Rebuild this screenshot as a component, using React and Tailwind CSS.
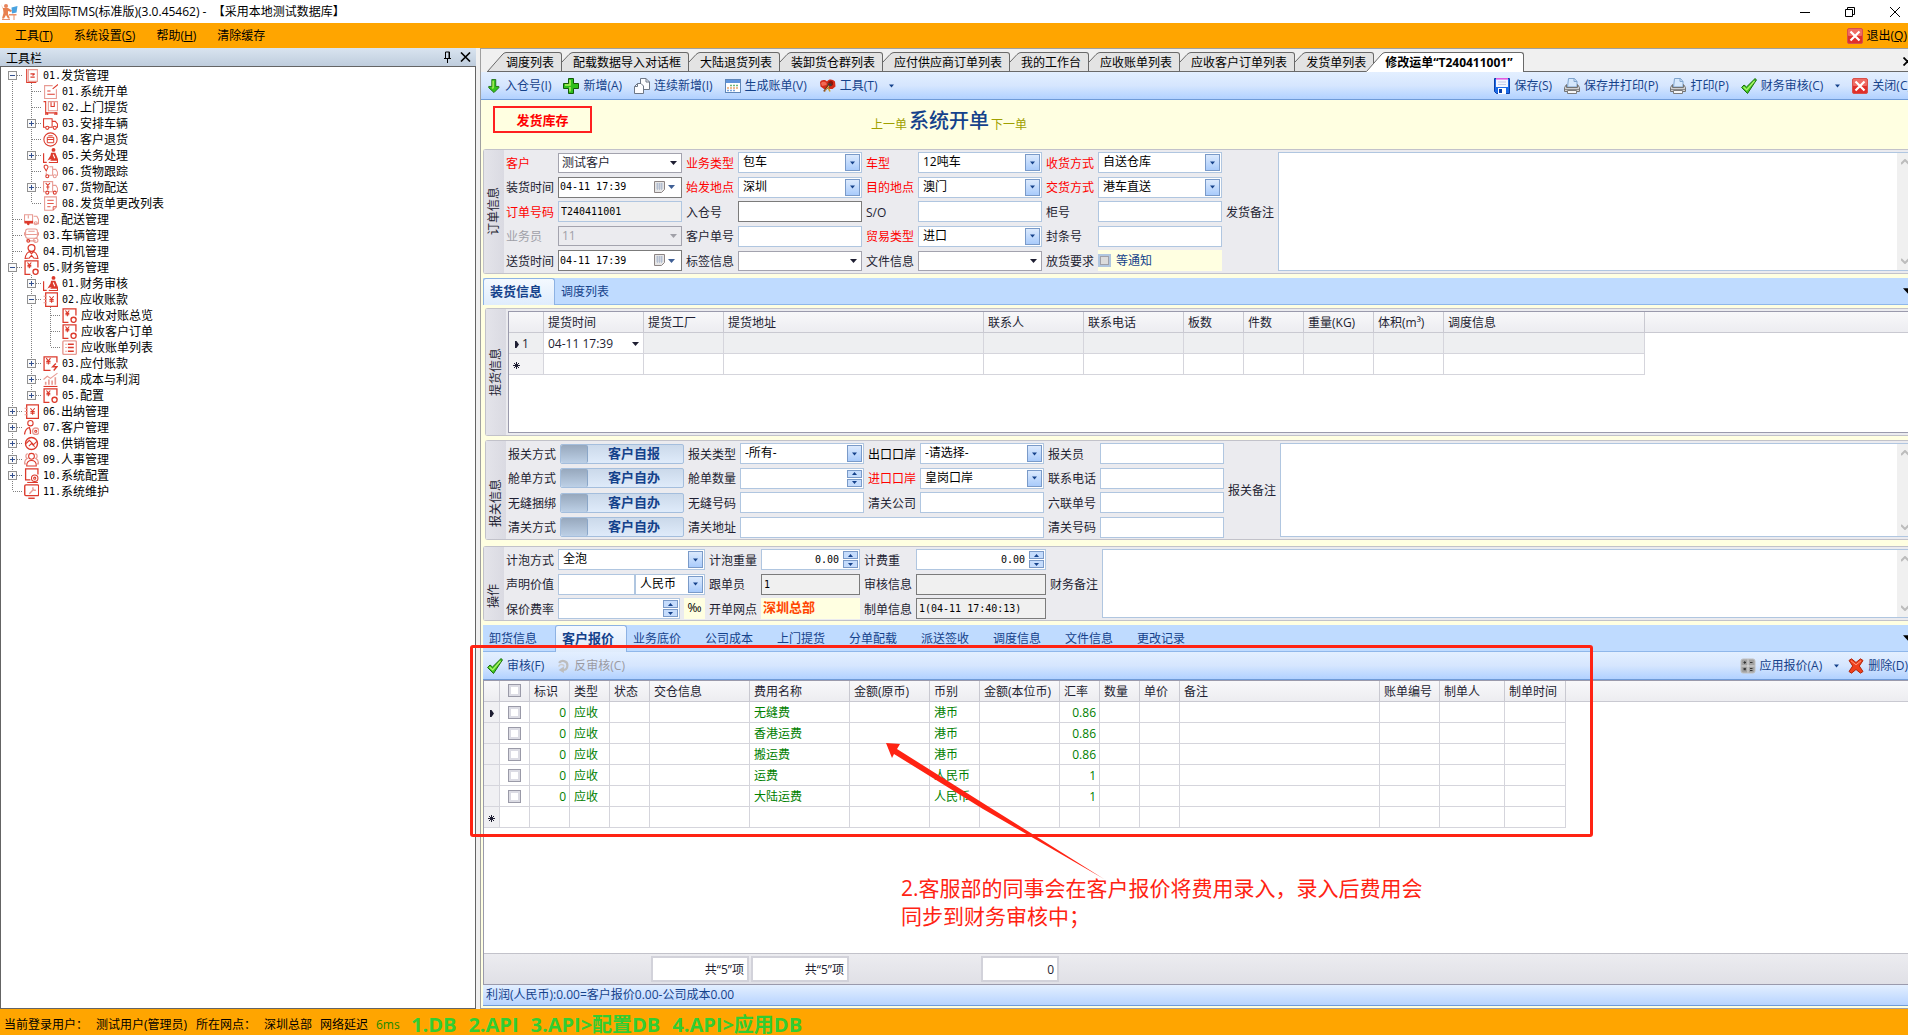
import React from "react";

/* ---------- small drawings ---------- */

const Svg = ({ s = 16, vb = "0 0 16 16", className = "", children }) => (
  <svg width={s} height={s} viewBox={vb} fill="none" className={`shrink-0 ${className}`} aria-hidden="true">
    {children}
  </svg>
);

const Caret = ({ className = "" }) => (
  <svg width="7" height="4" viewBox="0 0 7 4" className={`shrink-0 ${className}`} fill="currentColor" aria-hidden="true">
    <path d="M0 0h7L3.500 4z" />
  </svg>
);

const LogoIcon = () => (
  <Svg s={17} vb="0 0 17 17">
    <circle cx="5" cy="3" r="2" fill="#e8845c" />
    <path d="M0 1.500l2 3.500 5 0 4 2.500-1 1.500-3-1v3l2 4.500H7L5 12l-2 3.500H1L2.500 10 2 6z" fill="#e8804f" />
    <path d="M8 11h7.500v1.500h-2V17h-1v-4.500H8z" fill="#e8916d" />
    <path d="M10.500 4.500l6-1.500-1 6.500-4.500 1z" fill="#4aa3e0" />
    <path d="M1 16.500h8" stroke="#e8916d" />
  </Svg>
);

const CloseRed = () => (
  <Svg>
    <rect x=".5" y=".5" width="15" height="15" rx="1.500" fill="#e02f2b" stroke="#d8504a" />
    <rect x="1" y="1" width="14" height="7" rx="1" fill="#ef6b64" />
    <path d="M3.500 3.500l9 9M12.500 3.500l-9 9" stroke="#fff" strokeWidth="2.200" />
  </Svg>
);

const icons = {
  down: (
    <Svg s={14} vb="0 0 14 16">
      <path d="M4.500.500h4.500v8h3.500v1.500L7 15.500 1 10V8.500h3.500z" fill="#35c41c" stroke="#1c6b0e" />
      <path d="M6 2v8l-1.500.500" stroke="#b6f060" strokeWidth="1.500" />
    </Svg>
  ),
  plus: (
    <Svg>
      <path d="M5.500.500h5v5h5v5h-5v5h-5v-5h-5v-5h5z" fill="#2fbf1c" stroke="#145a0a" />
      <path d="M7 2v5H2M7 9v4.500" stroke="#b6f060" strokeWidth="1.500" />
    </Svg>
  ),
  pages: (
    <Svg>
      <path d="M6.500.500h5.500l3.500 3.500v7.500h-9z" fill="#fdfdff" stroke="#6d7786" />
      <path d="M3.500 5.500h3.500l2.500 2.500v7.500h-9v-7z" fill="#fdfdff" stroke="#6d7786" />
      <path d="M12 .500v3.500h3.500M3.500 5.500v3H.500" stroke="#6d7786" />
    </Svg>
  ),
  calendar: (
    <Svg>
      <rect x=".5" y="1.500" width="15" height="13" fill="#fff" stroke="#5f86b8" />
      <rect x="1" y="2" width="14" height="3" fill="#5f93da" />
      <path d="M5 7.500h9" stroke="#6cb87c" strokeWidth="1.500" strokeDasharray="2 1" />
      <path d="M2 10h12" stroke="#e8a36b" strokeWidth="1.500" strokeDasharray="2 1" />
      <path d="M2 12.500h9" stroke="#7aa4dc" strokeWidth="1.500" strokeDasharray="2 1" />
    </Svg>
  ),
  tools: (
    <Svg s={17} vb="0 0 17 16">
      <path d="M1 5c1-3 5-3 7-1 2-3 6-2 8 0l.5 5-3 2.500H5L1.500 9z" fill="#d42c18" />
      <path d="M2 5.500c1.500-2 4-1.500 5.500 0v2L3 8.500z" fill="#f26a54" />
      <path d="M9 4.500l3-1.500 2 1.500v3l-2 1z" fill="#8e1408" />
      <path d="M11 6l-6 8" stroke="#6b3a1c" strokeWidth="2" />
      <path d="M11 7l-5.500 7" stroke="#e6a860" />
      <path d="M8 6l4 0 1 2-2 1z" fill="#3c3c3c" />
      <path d="M9 10l2 4" stroke="#caa02c" strokeWidth="1.500" />
    </Svg>
  ),
  save: (
    <Svg>
      <path d="M.500.500h15v15H2.500l-2-2z" fill="#1c6be8" stroke="#0b3fa8" />
      <rect x="2" y="1" width="12" height="8" fill="#f4f6ff" />
      <path d="M2 .800h12" stroke="#e05ce0" strokeWidth="1.600" />
      <path d="M4 4h8M4 6.500h8" stroke="#c4cce8" />
      <rect x="4" y="10" width="8" height="6" fill="#fff" />
      <rect x="5" y="11" width="3" height="4" fill="#0b3fa8" />
    </Svg>
  ),
  printer: (
    <Svg>
      <path d="M3.500 9L4.500.500h6l2.500 3V9z" fill="#d6e8fc" stroke="#7ea3cc" />
      <path d="M10 .500v3h3" stroke="#7ea3cc" />
      <path d="M2.500 6.500L.500 9.500v4h15v-4l-2-3v3h-11z" fill="#d0d0d0" stroke="#747474" />
      <path d="M1 11.500h14" stroke="#8a8a8a" />
      <path d="M3.500 12.500h9v3h-9z" fill="#f6f6f6" stroke="#7c7c7c" />
    </Svg>
  ),
  check: (
    <Svg>
      <path d="M.600 9.500L3 7l2.500 2L14 .600l1.500 1.200L6.500 15.500z" fill="#43cc22" stroke="#1a6a0c" />
      <path d="M2.500 9l3.200 3L13.500 3" stroke="#b4f26c" strokeWidth="1.200" />
    </Svg>
  ),
  close: <CloseRed />,
  undo: (
    <Svg s={14} vb="0 0 14 16">
      <path d="M2.500 4.500C5 .500 12 2 12 7S9.500 12.500 7 12.500" stroke="#bdbdbd" strokeWidth="2.600" />
      <path d="M2 12.500L8 8.500v7.500z" fill="#bdbdbd" />
      <path d="M2 8.500c1-3 6-3 6 0" stroke="#cbcbcb" strokeWidth="1.800" />
    </Svg>
  ),
  calc: (
    <Svg>
      <rect x="1" y="1" width="14" height="14" rx="2" fill="#a2a2a2" stroke="#c0c0c0" />
      <path d="M8 1.500v13M1.500 8h13" stroke="#dcdcdc" />
      <path d="M3.500 4.500h2.500M4.700 3.300v2.500M10 4.500h2.500M3.700 10.200l2 2M5.700 10.200l-2 2M10 10.500h2.500M10 12.500h2.500" stroke="#333" strokeWidth="1.200" />
    </Svg>
  ),
  del: (
    <Svg>
      <path d="M1 2.500L3.500.800 8 4.500 12.500.800 15 2.500 11.300 8l3.700 5.500-2.500 1.700L8 11.500l-4.500 3.700L1 13.500 4.700 8z" fill="#f0401c" stroke="#b02408" />
      <path d="M3 2.800l5 4 5-4" stroke="#ff9a7c" />
    </Svg>
  ),
};

const RED = "#dc3a2c";
const SOFT = "#e89a92";
const yen = (x, y, k = 1) => (
  <path d={`M${x - 2 * k} ${y - 3 * k}l${2 * k} ${2.5 * k} ${2 * k} ${-2.5 * k}M${x - 2 * k} ${y}h${4 * k}M${x - 2 * k} ${y + 1.5 * k}h${4 * k}M${x} ${y - 0.5 * k}v${3.5 * k}`} stroke={RED} />
);
const treeIcons = {
  stack: <><path d="M4 1.500h8.500v11H4z" stroke={SOFT} /><path d="M2.500 1v12.500h9" stroke={RED} /><path d="M6 5.500h4M6 8.500h4M8 7l2-1.500" stroke={RED} /></>,
  edit: <><path d="M9 1.500H1.500v12h11V5" stroke={SOFT} /><path d="M9 4.500l5-4" stroke={RED} /><path d="M4 6.500h3M4 9.500h7" stroke={RED} /></>,
  trolley: <><path d="M.500 1.500h2v10.500h11" stroke={RED} /><path d="M5 1.500h8.500v8.500H5z" stroke={SOFT} /><path d="M7.500 2v4h3V2" stroke={RED} /><circle cx="3.500" cy="13" r="1" stroke={RED} /><circle cx="12" cy="13" r="1" stroke={RED} /></>,
  truck: <><path d="M2.500 10.500H.500v-8h8v8H5.500M8.500 5h3l2 2.500v3h-1" stroke={RED} /><circle cx="4" cy="11" r="1.500" stroke={RED} /><circle cx="11" cy="11" r="1.500" stroke={RED} /></>,
  circle: <><circle cx="7" cy="7" r="6.200" stroke={RED} /><path d="M4 5h6v5H4zM4 7h6M5 3.500h4" stroke={RED} strokeWidth=".9" /></>,
  desk: <><path d="M.500 5v8.500h3" stroke={RED} strokeWidth="1.200" /><circle cx="9.800" cy="1.800" r="1.800" fill={RED} /><path d="M7.500 4.500l4 0 2.500 6v3.500H5L8 10.500 5.500 11 4 12l3-5z" fill={RED} /><path d="M9.500 6l1.500 3.500M6 12.500h7" stroke="#fff" /></>,
  pin: <><path d="M1.300 1.500a2 2 0 013.400 1.500L3 6.500 1 3z" stroke={RED} /><path d="M6 2.500h3v8H5.500M3 8v3M9 5h3l1.500 2.500v3H12.500" stroke={SOFT} /><circle cx="4" cy="11.500" r="1.400" stroke={RED} /><circle cx="11" cy="11.500" r="1.400" stroke={SOFT} /></>,
  truckYen: <><path d="M2.500 11H.500V1.500h8.500V11H5.500M9 5h3l1.500 2.500V11h-1" stroke={SOFT} /><path d="M2.500 3l2 2 2-2M3 6.500h3M4.500 5V9" stroke={RED} /><circle cx="4" cy="11.800" r="1.400" stroke={RED} /><circle cx="11" cy="11.800" r="1.400" stroke={RED} /></>,
  lines: <><path d="M1.500.800h11v9.500l-3 3h-8z" stroke={SOFT} /><path d="M4 4h6M4 7h6M4 10h3M12.500 10h-3v3" stroke={RED} strokeWidth=".8" /></>,
  van: <><path d="M.500 2.500h7.500v7H.500z" stroke={SOFT} /><path d="M.500 9.500h8" stroke={RED} strokeWidth="2.500" /><path d="M9 4h3l1.500 3v4H9M4 3v3" stroke={SOFT} /><circle cx="4" cy="11" r="1.300" fill={RED} /><circle cx="11" cy="10.500" r="1.400" stroke={SOFT} /></>,
  bus: <><rect x="1.500" y="1" width="11" height="8.500" rx="2" stroke={SOFT} /><path d="M.500 4v3M13.500 4v3M2 6h10M4 3h6M3 9.500V12h8" stroke={SOFT} /><circle cx="4" cy="12" r="1.300" stroke={RED} /><circle cx="11" cy="11.500" r="2" stroke={SOFT} /></>,
  person: <><circle cx="7" cy="3.800" r="3.200" stroke={RED} strokeWidth="1.200" /><path d="M1 13.500c.5-4 2-5.500 4-6.500l2 2 2-2c2 1 3.500 2.500 4 6.500l-4-.5-2-2.500-2 2.500z" stroke={RED} /></>,
  yenGear: <><path d="M13 7V.800H1v12.700h5" stroke={RED} strokeWidth="1.200" />{yen(5, 5, 0.9)}<circle cx="10.800" cy="11" r="2.400" stroke={RED} strokeWidth="1.300" /></>,
  yenBook: <><path d="M2.500.800h11v12.700h-11z" stroke={RED} strokeWidth="1.200" /><path d="M.500 4h3M.500 7h3M.500 10h3" stroke={SOFT} />{yen(8, 7)}</>,
  list: <><rect x=".8" y=".8" width="12.600" height="12.600" rx="1" stroke={SOFT} strokeWidth="1.300" /><path d="M5.500 4H11M5.500 7H11M5.500 10.500H11" stroke={RED} strokeWidth="1.300" /><path d="M3 4h1.500M3 7h1.500M3 10.500h1.500" stroke={SOFT} /></>,
  yenPay: <><path d="M13 6V.800H1v12.700h6" stroke={RED} strokeWidth="1.200" />{yen(5, 5)}<path d="M12 7l-3 3h4l-3 3.500" stroke={RED} strokeWidth="1.300" /></>,
  chart: <><path d="M.500 7L4 4l3 2 6.500-5" stroke={SOFT} /><path d="M2.500 12V9M5.500 12V7M8.500 12V8M11.500 12V5" stroke={SOFT} strokeWidth="1.500" /><path d="M.500 13.500h13" stroke={RED} /></>,
  personGear: <><circle cx="6" cy="3" r="2.500" stroke={RED} /><path d="M.500 13.500C1 9 3 7.500 5 7l1 3v3" stroke={RED} strokeWidth="1.200" /><circle cx="11" cy="10.500" r="3" stroke={SOFT} strokeWidth="1.300" /><circle cx="11" cy="10.500" r="1" stroke={RED} /></>,
  trade: <><circle cx="7" cy="7" r="5.600" stroke={RED} strokeWidth="1.300" /><path d="M2 7l3-3 4 4 3-3M4.500 9.500L7 7l3 3" stroke={RED} /></>,
  people: <><circle cx="7" cy="4" r="2.700" stroke={RED} /><path d="M2.500 13c0-3.500 2-5 4.500-5s4.500 1.500 4.500 5z" stroke={RED} /><path d="M3.500 1.500C1 2 1.500 5.500 3 6 1 7 .500 9 .500 11H2M10.500 1.500C13 2 12.500 5.500 11 6c2 1 2.500 3 2.500 5H12" stroke={SOFT} strokeWidth="1.200" /></>,
  monGear: <><path d="M13 6V.800H1.500V11H6" stroke={RED} strokeWidth="1.200" /><circle cx="10" cy="9.500" r="3" stroke={RED} /><circle cx="10" cy="9.500" r="1" stroke={RED} /><path d="M3 13.500h10" stroke={RED} /></>,
  monitor: <><rect x=".7" y=".8" width="13" height="10" rx="1" stroke={RED} strokeWidth="1.300" /><path d="M5 9l4-4M8.500 3c-1 2 1 3.500 2.500 2.500" stroke={SOFT} strokeWidth="1.300" /><path d="M4 13.300h6" stroke={RED} strokeWidth="1.300" /></>,
};

/* ---------- navigation tree ---------- */

/* One guide character per level: v line, t tee, l corner, p/m expander, P/M expander at an end of its line. */
const tree = [
  ["M", "stack", "01.", "发货管理"],
  ["vt", "edit", "01.", "系统开单"],
  ["vt", "trolley", "02.", "上门提货"],
  ["vp", "truck", "03.", "安排车辆"],
  ["vt", "circle", "04.", "客户退货"],
  ["vp", "desk", "05.", "关务处理"],
  ["vt", "pin", "06.", "货物跟踪"],
  ["vp", "truckYen", "07.", "货物配送"],
  ["vl", "lines", "08.", "发货单更改列表"],
  ["t", "van", "02.", "配送管理"],
  ["t", "bus", "03.", "车辆管理"],
  ["t", "person", "04.", "司机管理"],
  ["m", "yenGear", "05.", "财务管理"],
  ["vp", "desk", "01.", "财务审核"],
  ["vm", "yenBook", "02.", "应收账款"],
  ["vvt", "yenGear", "", "应收对账总览"],
  ["vvt", "yenGear", "", "应收客户订单"],
  ["vvl", "list", "", "应收账单列表"],
  ["vp", "yenPay", "03.", "应付账款"],
  ["vp", "chart", "04.", "成本与利润"],
  ["vP", "yenGear", "05.", "配置"],
  ["p", "yenBook", "06.", "出纳管理"],
  ["p", "personGear", "07.", "客户管理"],
  ["p", "trade", "08.", "供销管理"],
  ["p", "people", "09.", "人事管理"],
  ["p", "monGear", "10.", "系统配置"],
  ["l", "monitor", "11.", "系统维护"],
];

function Guide({ c }) {
  const box = "pPmM".includes(c);
  return (
    <svg width="19" height="16" viewBox="0 0 19 16" shapeRendering="crispEdges" fill="none" className="shrink-0" aria-hidden="true">
      <g stroke="#808080" strokeDasharray="1 1">
        {c !== "M" && <path d="M9.500 0V8" />}
        {"vtpmM".includes(c) && <path d="M9.500 8V16" />}
        {c !== "v" && <path d="M10 8.500H19" />}
      </g>
      {box && (
        <>
          <rect x="5.500" y="4.500" width="8" height="8" fill="#fafafa" stroke="#919191" />
          <path d="M7 8.500h5" stroke="#33508f" />
          {"pP".includes(c) && <path d="M9.500 6v5" stroke="#33508f" />}
        </>
      )}
    </svg>
  );
}

function Sidebar() {
  return (
    <aside className="flex w-[476px] shrink-0 flex-col">
      <div className="flex h-[18px] items-center bg-linear-to-b from-[#d9e4f0] to-[#bfcddd] pr-[5px] pl-[6px]">
        <h2 className="flex-1 pt-[3px]">工具栏</h2>
        <button aria-label="固定" className="mr-2">
          <svg width="9" height="12" viewBox="0 0 9 12" stroke="#000" fill="none"><path d="M2.500 1h4v6M6 1v6M1 7.500h7M4.500 8v4M2.500 1v6" /></svg>
        </button>
        <button aria-label="关闭工具栏">
          <svg width="11" height="10" viewBox="0 0 11 10" stroke="#000" strokeWidth="1.600"><path d="M1 .500l9 9M10 .500l-9 9" /></svg>
        </button>
      </div>
      <nav className="flex-1 border border-[#646464] bg-white text-black">
        <ul>
          {tree.map(([guides, icon, no, name], i) => (
            <li key={i} className="flex h-4 items-center pl-[2px] leading-4">
              {[...guides].map((c, k) => <Guide key={k} c={c} />)}
              <a href="#" className="flex items-center">
                <svg width="15" height="15" viewBox="0 0 14 14" fill="none" className="mr-1 ml-[2px] shrink-0" aria-hidden="true">{treeIcons[icon]}</svg>
                {no && <span className="w-[18px] pt-px font-['DejaVu_Sans_Mono'] text-[10px]">{no}</span>}
                <span className="pt-px">{name}</span>
              </a>
            </li>
          ))}
        </ul>
      </nav>
    </aside>
  );
}

/* ---------- form controls ---------- */

const line = "border-[#b0c6e0]";

function Label({ id, text, tone = "text-[#1e1e32]", w = "w-[52px]" }) {
  return <label htmlFor={id} className={`${w} shrink-0 pt-[2px] whitespace-nowrap ${tone}`}>{text}</label>;
}

function Text({ id, value = "", w = "w-[124px]", look = `${line} bg-white`, pad = "px-[2px]" }) {
  return <input id={id} defaultValue={value} className={`h-[21px] min-w-0 shrink-0 border text-black outline-none ${pad} ${w} ${look}`} />;
}

function Combo({ id, value, w = "w-[124px]", label }) {
  return (
    <div className={`relative h-[21px] shrink-0 border bg-white ${line} ${w}`}>
      <select id={id} aria-label={label} className="h-full w-full appearance-none bg-transparent pr-4 pb-px pl-1 text-black outline-none"><option>{value}</option></select>
      <span className="pointer-events-none absolute top-px right-px flex h-[17px] w-[15px] items-center justify-center border border-[#7a9ac8] bg-linear-to-b from-[#dceafd] to-[#a9cbfb] text-[#15428b]">
        <Caret className="w-[5px]" />
      </span>
    </div>
  );
}

function PlainSelect({ id, value = "", disabled }) {
  return (
    <div className={`relative h-[20px] w-[124px] shrink-0 border border-[#a3a3ae] ${disabled ? "bg-[#ebebef] text-[#a0a0a8]" : "bg-white text-[#1e1e32]"}`}>
      <select id={id} disabled={disabled} className="h-full w-full appearance-none bg-transparent pl-[3px] outline-none disabled:opacity-100"><option>{value}</option></select>
      <Caret className="pointer-events-none absolute top-[7px] right-1" />
    </div>
  );
}

function DateBox({ id, value }) {
  return (
    <div className="flex h-[21px] w-[124px] shrink-0 items-center border border-[#7b7b7b] bg-white">
      <input id={id} defaultValue={value} className="min-w-0 flex-1 pl-px font-['DejaVu_Sans_Mono'] text-[10px] text-black outline-none" />
      <button aria-label="选择日期" className="mr-[6px] flex items-center gap-[2px] text-[#3f5f95]">
        <svg width="12" height="13" viewBox="0 0 12 13" fill="none"><path d="M.500.500h10v8l-3 3h-7z" fill="#e6e6e6" stroke="#8c8484" /><path d="M2 3h7M2 5h7M2 7h7M3.500 2v7M5.500 2v7M7.500 2v7" stroke="#a8b4cc" strokeWidth=".7" /></svg>
        <Caret />
      </button>
    </div>
  );
}

function Spin({ id, value = "", w = "w-[124px]" }) {
  return (
    <div className={`flex h-[21px] shrink-0 border bg-white p-px ${line} ${w}`}>
      <input id={id} defaultValue={value} className="min-w-0 flex-1 pr-1 text-right font-['DejaVu_Sans_Mono'] text-[10px] text-black outline-none" />
      <div className="flex w-[15px] flex-col gap-px text-[#15428b]">
        <button aria-label="增加" className="flex flex-1 items-center justify-center border border-[#7a9ac8] bg-[#c5dcfc]"><Caret className="h-[3px] w-[5px] rotate-180" /></button>
        <button aria-label="减少" className="flex flex-1 items-center justify-center border border-[#7a9ac8] bg-[#c5dcfc]"><Caret className="h-[3px] w-[5px]" /></button>
      </div>
    </div>
  );
}

function Toggle({ id, value }) {
  return (
    <button id={id} role="switch" aria-checked="false" className="flex h-[20px] w-[124px] shrink-0 rounded-[2px] border border-[#a4bedd] bg-linear-to-b from-[#cbd9ea] to-[#dfebfa] text-[13px] font-bold text-[#15428b]">
      <span className="h-full w-[27px] rounded-[2px] border-r border-[#8ba7c9] bg-linear-to-b from-[#97a8bd] to-[#bdd0e6]" />
      <span className="flex-1 pr-[3px] leading-4">{value}</span>
    </button>
  );
}

const RO = "border-[#7b7b7b] bg-[#f0f0f0]";

function Memo({ id, label }) {
  return (
    <div className="ml-1 flex flex-1 self-stretch">
      <label htmlFor={id} className="w-[52px] shrink-0 self-center pt-[2px] whitespace-nowrap text-[#1e1e32]">{label}</label>
      <div className={`flex flex-1 border border-r-0 bg-white ${line}`}>
        <textarea id={id} className="min-w-0 flex-1 resize-none outline-none" />
        <div className="flex w-[11px] flex-col items-start justify-between overflow-hidden bg-[#f0f0f0] py-[6px] pl-1">
          <svg width="8" height="6" viewBox="0 0 8 6" className="shrink-0" fill="none" stroke="#bcbcbc" strokeWidth="2"><path d="M0 5l4-4 4 4" /></svg>
          <svg width="8" height="6" viewBox="0 0 8 6" className="shrink-0" fill="none" stroke="#bcbcbc" strokeWidth="2"><path d="M0 1l4 4 4-4" /></svg>
        </div>
      </div>
    </div>
  );
}

function Group({ title, low, className = "", children }) {
  return (
    <section className={`flex rounded-l-[3px] border border-r-0 border-[#c2c2ca] bg-[#ebebef] ${className}`}>
      <h3 className={`flex w-[20px] shrink-0 items-center bg-linear-to-r from-[#e4e4ea] to-[#dadae2] text-[#1e1e32] ${low ? "justify-end pb-3" : "justify-center"} flex-col`}>
        <span className="rotate-180 leading-4 [text-orientation:sideways] [writing-mode:vertical-rl]">{title}</span>
      </h3>
      {children}
    </section>
  );
}

const rd = "text-[#ff0000]";

function Cells({ rows, className = "" }) {
  return (
    <div className={`flex flex-col justify-between ${className}`}>
      {rows.map((row, i) => (
        <div key={i} className="flex items-center gap-1">
          {row.map(([id, text, el, tone], k) => (
            <div key={k} className="flex items-center">
              <Label id={id} text={text} tone={tone} />
              {el}
            </div>
          ))}
        </div>
      ))}
    </div>
  );
}

const orderRows = [
  [
    ["cust", "客户", <PlainSelect id="cust" value="测试客户" />, rd],
    ["biz", "业务类型", <Combo id="biz" value="包车" />, rd],
    ["car", "车型", <Combo id="car" value="12吨车" />, rd],
    ["recv", "收货方式", <Combo id="recv" value="自送仓库" />, rd],
  ],
  [
    ["load", "装货时间", <DateBox id="load" value="04-11 17:39" />],
    ["from", "始发地点", <Combo id="from" value="深圳" />, rd],
    ["to", "目的地点", <Combo id="to" value="澳门" />, rd],
    ["give", "交货方式", <Combo id="give" value="港车直送" />, rd],
  ],
  [
    ["ono", "订单号码", <Text id="ono" value="T240411001" look="border-[#b0c6e0] bg-[#f0f0f0] font-['DejaVu_Sans_Mono'] text-[10px]" />, rd],
    ["wh", "入仓号", <Text id="wh" look="border-[#7b7b7b] bg-white" />],
    ["so", "S/O", <Text id="so" />],
    ["cab", "柜号", <Text id="cab" />],
  ],
  [
    ["sales", "业务员", <PlainSelect id="sales" value="11" disabled />, "text-[#a0a0a8]"],
    ["cno", "客户单号", <Text id="cno" />],
    ["trade", "贸易类型", <Combo id="trade" value="进口" />, rd],
    ["seal", "封条号", <Text id="seal" />],
  ],
  [
    ["deliv", "送货时间", <DateBox id="deliv" value="04-11 17:39" />],
    ["tag", "标签信息", <PlainSelect id="tag" />],
    ["file", "文件信息", <PlainSelect id="file" />],
    ["hold", "放货要求",
      <span className="flex h-[21px] w-[124px] shrink-0 items-center bg-[#ffffe1] text-[#15428b]">
        <input id="hold" type="checkbox" className="mr-[5px] size-[13px] appearance-none border-2 border-[#b0c6e0] bg-[#dcdcdc] outline outline-1 -outline-offset-3 outline-[#a0a0a8]" />
        <label htmlFor="hold" className="pt-px">等通知</label>
      </span>],
  ],
];

const customsRows = [
  [
    ["d1", "报关方式", <Toggle id="d1" value="客户自报" />],
    ["d2", "报关类型", <Combo id="d2" value="-所有-" />],
    ["d3", "出口口岸", <Combo id="d3" value="-请选择-" />, "text-black"],
    ["d4", "报关员", <Text id="d4" />],
  ],
  [
    ["e1", "舱单方式", <Toggle id="e1" value="客户自办" />],
    ["e2", "舱单数量", <Spin id="e2" />],
    ["e3", "进口口岸", <Combo id="e3" value="皇岗口岸" />, rd],
    ["e4", "联系电话", <Text id="e4" />],
  ],
  [
    ["f1", "无缝捆绑", <Toggle id="f1" value="客户自办" />],
    ["f2", "无缝号码", <Text id="f2" />],
    ["f3", "清关公司", <Text id="f3" />],
    ["f4", "六联单号", <Text id="f4" />],
  ],
  [
    ["g1", "清关方式", <Toggle id="g1" value="客户自办" />],
    ["g2", "清关地址", <Text id="g2" w="w-[304px]" />],
    ["g4", "清关号码", <Text id="g4" />],
  ],
];

const mono = "font-['DejaVu_Sans_Mono'] text-[10px]";
const opRows = [
  [
    ["h1", "计泡方式", <Combo id="h1" value="全泡" w="w-[147px]" />],
    ["h2", "计泡重量", <Spin id="h2" value="0.00" w="w-[99px]" />],
    ["h3", "计费重", <Spin id="h3" value="0.00" w="w-[130px]" />],
  ],
  [
    ["i1", "声明价值",
      <span className="flex"><Text id="i1" w="w-[77px]" /><Combo id="i1c" label="币种" value="人民币" w="w-[70px]" /></span>],
    ["i2", "跟单员", <Text id="i2" value="1" w="w-[99px]" look={`${RO} ${mono}`} />],
    ["i3", "审核信息", <Text id="i3" w="w-[130px]" look={RO} />],
  ],
  [
    ["j1", "保价费率",
      <span className="flex w-[147px] justify-between">
        <Spin id="j1" w="w-[122px]" />
        <span className="w-[21px] bg-[#ffffe1] text-center leading-5">‰</span>
      </span>],
    ["j2", "开单网点",
      <output id="j2" className="block h-[21px] w-[99px] bg-[#ffffe1] pl-[2px] text-[13px] leading-[18px] font-bold text-[#ff4500]">深圳总部</output>],
    ["j3", "制单信息", <Text id="j3" value="1(04-11 17:40:13)" w="w-[130px]" look={`${RO} ${mono}`} />],
  ],
];

/* ---------- tabs and toolbars ---------- */

const docTabs = ["调度列表", "配载数据导入对话框", "大陆退货列表", "装卸货仓群列表", "应付供应商订单列表", "我的工作台", "应收账单列表", "应收客户订单列表", "发货单列表"];

function DocTabs() {
  return (
    <div className="flex h-6 items-end overflow-hidden border-t border-[#a0a0a0] bg-[#f0f0f0] pl-[6px]">
      <div className="flex h-5 items-end">
        {docTabs.map((t, i) => (
          <button key={t} className="flex h-5 items-stretch text-black">
            {i === 0 ? (
              <svg width="19" height="20" viewBox="0 0 19 20"><path d="M0 20L15 3Q17 .500 19 .500V20z" fill="#e3e3e3" /><path d="M0 19.500h19M.500 19.500L15 3Q17 .500 19 .500" stroke="#696969" fill="none" /></svg>
            ) : (
              <svg width="11" height="20" viewBox="0 0 11 20"><path d="M0 10L7 2.500Q9 .500 11 .500V20H0z" fill="#e3e3e3" /><path d="M0 19.500h11M0 10L7 2.500Q9 .500 11 .500" stroke="#696969" fill="none" /></svg>
            )}
            <span className="rounded-tr-[3px] border-t border-r border-b border-[#696969] bg-[#e3e3e3] pr-[7px] leading-[19px] whitespace-nowrap">{t}</span>
          </button>
        ))}
        <button className="relative -ml-2 flex h-5 items-stretch font-bold text-black">
          <svg width="19" height="20" viewBox="0 0 19 20"><path d="M0 20L15 3Q17 .500 19 .500V20z" fill="#fff" /><path d="M.500 19.500L15 3Q17 .500 19 .500" stroke="#696969" fill="none" /></svg>
          <span className="rounded-tr-[3px] border-t border-r border-[#696969] bg-white pr-[10px] leading-[19px] whitespace-nowrap">修改运单“T240411001”</span>
        </button>
      </div>
      <div className="flex h-5 flex-1 items-center justify-end border-b border-[#696969]">
        <button aria-label="关闭页面" className="-mr-1">
          <svg width="9" height="9" viewBox="0 0 9 9" stroke="#000" strokeWidth="1.800"><path d="M.500.500l8 8M8.500.500l-8 8" /></svg>
        </button>
      </div>
    </div>
  );
}

function Tool({ icon, text, caret, off }) {
  return (
    <button disabled={off} className={`flex shrink-0 items-center gap-1 whitespace-nowrap ${off ? "text-[#9a9aa2]" : "text-[#15428b]"}`}>
      {icons[icon]}
      <span>{text}</span>
      {caret && <Caret className="ml-2 w-[5px]" />}
    </button>
  );
}

const bar = "flex h-7 items-center gap-3 overflow-hidden border-b border-[#6f9bd8] bg-linear-to-b from-[#e3efff] via-[#d6e6fe] to-[#b1d1ff]";

function PageTabs({ items, active }) {
  return (
    <div className="ml-[2px] flex h-[27px] border-b border-[#8fb7ea] bg-[#bfdbff] text-[#15428b]">
      {items.map((t, i) => (
        <button
          key={t}
          className={
            i === active
              ? "-mb-px w-[72px] rounded-t-[3px] border border-b-0 border-[#8db2e3] bg-linear-to-b from-[#f4f9ff] to-[#dfecfc] pb-[2px] pl-[6px] text-left text-[13px] font-bold whitespace-nowrap"
              : "w-[72px] pt-px pl-[6px] text-left whitespace-nowrap"
          }
        >
          {t}
        </button>
      ))}
      <button aria-label="更多" className="-mr-[5px] ml-auto text-black"><Caret className="h-[6px] w-[10px]" /></button>
    </div>
  );
}

/* ---------- tables ---------- */

const pickCols = [["", 35], ["提货时间", 100], ["提货工厂", 80], ["提货地址", 260], ["联系人", 100], ["联系电话", 100], ["板数", 60], ["件数", 60], ["重量(KG)", 70], ["体积(m³)", 70], ["调度信息", 201]];
const feeCols = [["", 16], ["*", 30], ["标识", 40], ["类型", 40], ["状态", 40], ["交仓信息", 100], ["费用名称", 100], ["金额(原币)", 80], ["币别", 50], ["金额(本位币)", 80], ["汇率", 40], ["数量", 40], ["单价", 40], ["备注", 200], ["账单编号", 60], ["制单人", 65], ["制单时间", 61]];
const fees = [["无缝费", "港币", "0.86"], ["香港运费", "港币", "0.86"], ["搬运费", "港币", "0.86"], ["运费", "人民币", "1"], ["大陆运费", "人民币", "1"]];

const th = "h-[21px] border-r border-b border-[#c9c9d1] p-0 pt-px pl-1 text-left font-normal whitespace-nowrap";
const td = "h-[21px] border-r border-b border-[#d5d5dc] p-0 pt-[2px] pl-1 whitespace-nowrap";
const headRow = "bg-linear-to-b from-[#f8f8fa] to-[#ececf0] text-[#1e1e32]";

const Cols = ({ cols }) => (
  <colgroup>
    {cols.map(([, w], i) => <col key={i} style={{ width: w }} />)}
    <col />
  </colgroup>
);
const Marker = () => <svg width="4" height="7" viewBox="0 0 4 7" className="inline-block align-middle"><path d="M0 0h1.500L4 3.500 1.500 7H0z" fill="#1e1e32" /></svg>;
const Star = () => <svg width="7" height="7" viewBox="0 0 7 7" className="inline-block align-middle" stroke="#1e1e32"><path d="M3.500 0v7M0 3.500h7M1 1l5 5M6 1L1 6" /></svg>;
const Tick = ({ label }) => <input type="checkbox" aria-label={label} className="-mt-[2px] ml-1 block size-[13px] appearance-none border border-[#9a9aa8] bg-white outline outline-2 -outline-offset-3 outline-[#dcdce4]" />;

function PickTable() {
  return (
    <table className="w-full table-fixed border-separate border-spacing-0 text-[#1e1e32]">
      <Cols cols={pickCols} />
      <thead>
        <tr className={headRow}>
          {pickCols.map(([t], i) => <th key={i} className={th}>{t}</th>)}
          <th className="border-b border-[#c9c9d1]" />
        </tr>
      </thead>
      <tbody>
        <tr className="bg-[#eeeff1]">
          <td className={td}><span className="ml-[2px]"><Marker /> 1</span></td>
          <td className={`${td} bg-white`}>
            <span className="flex items-center justify-between pr-1">04-11 17:39 <Caret /></span>
          </td>
          {pickCols.slice(2).map(([t]) => <td key={t} className={td} />)}
          <td className="bg-white" />
        </tr>
        <tr>
          <td className={`${td} bg-[#f3f3f5] leading-4`}><Star /></td>
          {pickCols.slice(1).map(([t]) => <td key={t} className={td} />)}
          <td />
        </tr>
      </tbody>
    </table>
  );
}

function FeeTable() {
  const blank = (n) => Array.from({ length: n }, (_, i) => <td key={`b${i}`} className={td} />);
  return (
    <table className="w-full table-fixed border-separate border-spacing-0 text-[#008000]">
      <Cols cols={feeCols} />
      <thead>
        <tr className={headRow}>
          {feeCols.map(([t], i) => <th key={i} className={th}>{t === "*" ? <Tick label="全选" /> : t}</th>)}
          <th className="border-b border-[#c9c9d1]" />
        </tr>
      </thead>
      <tbody>
        {fees.map(([name, cur, rate], i) => (
          <tr key={name}>
            <td className={`${td} bg-[#f0f0f3] leading-4`}>{i === 0 && <span className="ml-[2px]"><Marker /></span>}</td>
            <td className={td}><Tick label={name} /></td>
            <td className={`${td} pr-[3px] text-right`}>0</td>
            <td className={td}>应收</td>
            {blank(2)}
            <td className={td}>{name}</td>
            <td className={td} />
            <td className={td}>{cur}</td>
            <td className={td} />
            <td className={`${td} pr-[3px] text-right`}>{rate}</td>
            {blank(6)}
            <td />
          </tr>
        ))}
        <tr>
          <td className={`${td} bg-[#f0f0f3] leading-4`}><Star /></td>
          {blank(16)}
          <td />
        </tr>
      </tbody>
    </table>
  );
}

const sumBox = "h-[26px] border-2 border-[#d2d2da] bg-white pr-[3px] text-right leading-6 text-[#1e1e32]";

/* ---------- page ---------- */

export default function App() {
  return (
    <div className="relative flex min-h-screen w-full flex-col overflow-hidden bg-[#f0f0f0] font-['Open_Sans','Noto_Sans_CJK_SC',sans-serif] text-[12px] leading-4 text-black">
      <header className="flex h-[23px] items-center bg-white pl-[1px]">
        <LogoIcon />
        <h1 className="ml-[5px] flex-1">时效国际TMS(标准版)(3.0.45462) - &nbsp;【采用本地测试数据库】</h1>
        <div className="flex items-center gap-[35px] pr-2 text-black">
          <button aria-label="最小化"><svg width="10" height="10" viewBox="0 0 10 10" stroke="currentColor"><path d="M0 5.500h10" /></svg></button>
          <button aria-label="还原"><svg width="10" height="10" viewBox="0 0 10 10" stroke="currentColor" fill="none"><path d="M.500 2.500h7v7h-7zM2.500 2.500v-2h7v7h-2" /></svg></button>
          <button aria-label="关闭"><svg width="10" height="10" viewBox="0 0 10 10" stroke="currentColor"><path d="M0 0l10 10M10 0L0 10" /></svg></button>
        </div>
      </header>

      <div className="flex h-[25px] items-center gap-[21px] bg-[#ffa500] pl-[15px]">
        <button>工具(<u>T</u>)</button>
        <button>系统设置(<u>S</u>)</button>
        <button>帮助(<u>H</u>)</button>
        <button>清除缓存</button>
        <button className="mr-px ml-auto flex items-center gap-1 whitespace-nowrap"><CloseRed /><span>退出(<u>Q</u>)</span></button>
      </div>

      <div className="flex flex-1">
        <Sidebar />
        <main className="ml-1 flex min-w-0 flex-1 flex-col border-b border-l border-[#a0a0a0] bg-[#ffffe1]">
          <DocTabs />
          <div className={`${bar} pl-[6px]`}>
            <Tool icon="down" text="入仓号(I)" />
            <Tool icon="plus" text="新增(A)" />
            <Tool icon="pages" text="连续新增(I)" />
            <Tool icon="calendar" text="生成账单(V)" />
            <Tool icon="tools" text="工具(T)" caret />
            <div className="-mr-[3px] ml-auto flex gap-3">
              <Tool icon="save" text="保存(S)" />
              <Tool icon="printer" text="保存并打印(P)" />
              <Tool icon="printer" text="打印(P)" />
              <Tool icon="check" text="财务审核(C)" caret />
              <Tool icon="close" text="关闭(C)" />
            </div>
          </div>

          <div className="flex h-[49px] items-start pt-[6px] pl-3">
            <button className="h-[27px] w-[99px] border-2 border-[#ff2020] text-[13px] font-bold text-[#ff0000]">发货库存</button>
            <div className="ml-[279px] flex items-end gap-[2px] pt-[3px] whitespace-nowrap">
              <a href="#" className="text-[#a0a000]">上一单</a>
              <h2 className="text-[20px] leading-6 font-medium text-[#15428b]">系统开单</h2>
              <a href="#" className="text-[#a0a000]">下一单</a>
            </div>
          </div>

          <Group title="订单信息" className="ml-[2px] h-[125px]">
            <Cells rows={orderRows} className="my-[2px] ml-[2px]" />
            <div className="flex flex-1 pt-[2px] pb-[2px]"><Memo id="memo1" label="发货备注" /></div>
          </Group>

          <div className="mt-1"><PageTabs items={["装货信息", "调度列表"]} active={0} /></div>

          <Group title="提货信息" className="mt-[3px] ml-1 h-[128px]">
            <div className="my-[2px] ml-[2px] flex-1 overflow-hidden border border-r-0 border-[#9a9aac] bg-white"><PickTable /></div>
          </Group>

          <Group title="报关信息" low className="mt-1 ml-1 h-[100px]">
            <Cells rows={customsRows} className="mt-[2px] mb-px ml-[2px]" />
            <div className="flex flex-1 pt-[2px] pb-[2px]"><Memo id="memo2" label="报关备注" /></div>
          </Group>

          <Group title="操作" low className="mt-[6px] ml-[2px] h-[75px]">
            <Cells rows={opRows} className="mt-[2px] mb-px ml-[2px]" />
            <div className="flex flex-1 pt-[2px] pb-[2px]"><Memo id="memo3" label="财务备注" /></div>
          </Group>

          <div className="mt-1"><PageTabs items={["卸货信息", "客户报价", "业务底价", "公司成本", "上门提货", "分单配载", "派送签收", "调度信息", "文件信息", "更改记录"]} active={1} /></div>

          <div className="ml-[2px]">
            <div className={`${bar} pl-1`}>
              <Tool icon="check" text="审核(F)" />
              <Tool icon="undo" text="反审核(C)" off />
              <div className="ml-auto flex gap-[9px]">
                <Tool icon="calc" text="应用报价(A)" caret />
                <Tool icon="del" text="删除(D)" />
              </div>
            </div>
          </div>

          <div className="ml-[2px] flex flex-1 flex-col border-t border-l border-[#9a9aac] bg-white">
            <div className="flex-1"><FeeTable /></div>
            <div className="flex h-8 items-center border-t border-b border-[#c2c2ca] border-b-[#9a9aac] bg-linear-to-b from-[#ececf0] to-[#e0e0e6] pl-[167px]">
              <output className={`${sumBox} w-[98px]`}>共“5”项</output>
              <output className={`${sumBox} ml-[2px] w-[98px]`}>共“5”项</output>
              <output className={`${sumBox} ml-[132px] w-[78px]`}>0</output>
            </div>
          </div>
          <p className="mb-[2px] ml-[2px] h-[21px] border-b border-[#6f9bd8] bg-linear-to-b from-[#e3efff] to-[#b8d4ff] pl-[3px] leading-5 text-[#15428b]">利润(人民币):0.00=客户报价0.00-公司成本0.00</p>
        </main>
      </div>

      <footer className="flex h-[26px] items-center bg-[#ffa500] pt-[6px] pl-1 whitespace-nowrap">
        <span className="w-[92px]">当前登录用户：</span>
        <span className="w-[100px]">测试用户(管理员)</span>
        <span className="w-[68px]">所在网点：</span>
        <span className="w-[56px]">深圳总部</span>
        <span className="w-[56px]">网络延迟</span>
        <span className="w-[35px] text-[#1a8a00]">6ms</span>
        <span className="flex gap-3 text-[20px] leading-5 font-bold text-[#32cd32]">
          <span>1.DB</span><span>2.API</span><span>3.API&gt;配置DB</span><span>4.API&gt;应用DB</span>
        </span>
      </footer>

      {/* callout drawn over the fee grid */}
      <div className="pointer-events-none absolute top-[645px] left-[470px] h-[192px] w-[1123px] rounded-[3px] border-[3px] border-[#ff2313]" />
      <svg className="pointer-events-none absolute top-[743px] left-[886px]" width="220" height="138" viewBox="0 0 220 138" aria-hidden="true">
        <path d="M0 0L14 1L11 6L100 62L218 136L97 66L8 11L6 15z" fill="#ff2313" />
      </svg>
      <p className="pointer-events-none absolute top-[874px] left-[901px] text-[21px] leading-7 whitespace-nowrap text-[#ff2313]">
        2.客服部的同事会在客户报价将费用录入，录入后费用会<br />同步到财务审核中；
      </p>
    </div>
  );
}
